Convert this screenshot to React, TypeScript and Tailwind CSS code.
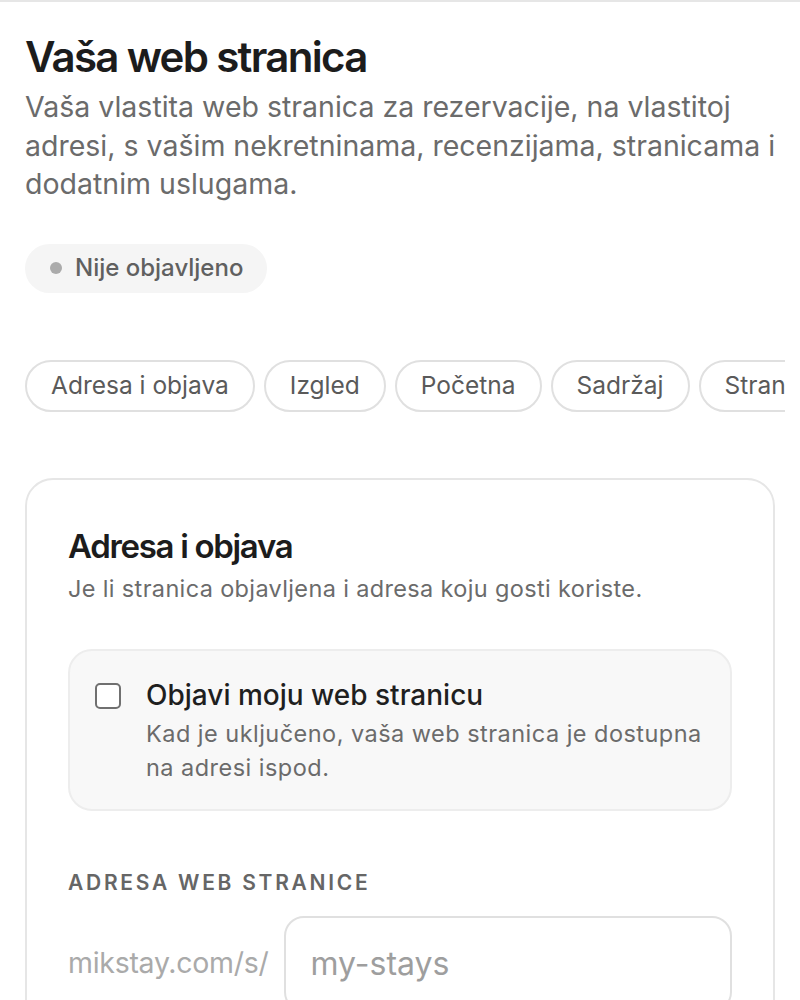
const tabs = ['Adresa i objava', 'Izgled', 'Početna', 'Sadržaj', 'Stranice']

export default function App() {
  return (
    <div className="min-h-screen bg-white border-t-2 border-[#e6e6e6] font-['Inter',sans-serif] overflow-hidden">
      <div className="px-[25px] pt-[30px]">
        <h1 className="text-[42px] leading-[50px] font-semibold tracking-[-0.04em] text-[#1c1c1c]">
          Vaša web stranica
        </h1>
        <p className="mt-[6px] mr-[-8px] text-[28.5px] leading-[38.5px] text-[#6b6b6b]">
          Vaša vlastita web stranica za rezervacije, na vlastitoj adresi, s vašim nekretninama, recenzijama, stranicama i dodatnim uslugama.
        </p>

        <div className="mt-[40px] inline-flex items-center gap-[13px] h-[49px] pl-[25px] pr-[24px] rounded-full bg-[#f5f5f5]">
          <span className="w-[12px] h-[12px] rounded-full bg-[#ababab]" />
          <span className="text-[24px] font-medium text-[#606060]">Nije objavljeno</span>
        </div>

        {/* tab row scrolls sideways */}
        <div className="mt-[67px] mr-[-10px] flex gap-[9px] overflow-hidden">
          {tabs.map((t) => (
            <button
              key={t}
              className="shrink-0 h-[52px] px-[24px] rounded-full border-2 border-[#e0e0e0] text-[24.5px] text-[#5a5a5a] bg-white"
            >
              {t}
            </button>
          ))}
        </div>

        <div className="mt-[66px] rounded-[28px] border-2 border-[#e6e6e6] px-[41px] pt-[46px] pb-[60px]">
          <h2 className="text-[33px] leading-[40px] font-semibold tracking-[-0.04em] text-[#1c1c1c]">
            Adresa i objava
          </h2>
          <p className="mt-[8px] text-[23.5px] leading-[30px] tracking-[0.015em] text-[#6b6b6b]">
            Je li stranica objavljena i adresa koju gosti koriste.
          </p>

          <div className="mt-[45px] flex gap-[25px] rounded-[24px] border-2 border-[#ededed] bg-[#f8f8f8] px-[25px] pt-[27px] pb-[24px]">
            <span className="mt-[5px] shrink-0 w-[26px] h-[26px] rounded-[5px] border-2 border-[#707070] bg-white" />
            <div>
              <div className="text-[28px] leading-[34px] font-medium text-[#1f1f1f]">Objavi moju web stranicu</div>
              <div className="mt-[5px] text-[23.5px] leading-[34px] tracking-[0.02em] text-[#6b6b6b]">
                Kad je uključeno, vaša web stranica je dostupna na adresi ispod.
              </div>
            </div>
          </div>

          <div className="mt-[58px] text-[21px] leading-[28px] font-semibold tracking-[0.13em] text-[#666]">
            ADRESA WEB STRANICE
          </div>

          <div className="mt-[19px] flex items-center gap-[15px]">
            <span className="text-[28.5px] text-[#aaa] tracking-[-0.01em]">mikstay.com/s/</span>
            <input
              placeholder="my-stays"
              className="flex-1 min-w-0 h-[96px] rounded-[20px] border-2 border-[#e0e0e0] px-[25px] text-[32px] placeholder:text-[#9e9e9e] outline-none"
            />
          </div>
        </div>
      </div>
    </div>
  )
}
